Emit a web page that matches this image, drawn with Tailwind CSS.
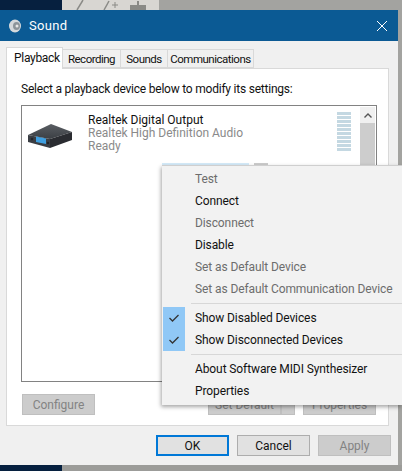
<!DOCTYPE html>
<html lang="en">
<head>
<meta charset="UTF-8">
<title>Sound</title>
<script src="https://cdn.jsdelivr.net/npm/@tailwindcss/browser@4"></script>
</head>
<body class="relative w-[402px] h-[471px] overflow-hidden bg-[#8f8f8f] text-[12px] leading-[16px] text-[#111] font-['Roboto','Liberation_Sans',sans-serif]">
  <!-- desktop behind the dialog -->
  <div class="flex h-[10px]">
    <div class="w-[62px] bg-[#06203f]"></div>
    <div class="w-[97px] bg-[#d8d6d2] flex items-start">
      <svg width="97" height="10" viewBox="0 0 97 10" fill="none" stroke="#8a8a86" stroke-width="1.5">
        <path d="M15 10 L21 0"/>
        <path d="M42 10 L47 1"/>
        <path d="M50 5h6M53 2v6" stroke-width="1"/>
        <path d="M69 9 h14 v-3 h-14z M76 6 V1" fill="#8a8a86" stroke-width="2"/>
      </svg>
    </div>
    <div class="flex-1 bg-[#a3a3a0]"></div>
  </div>
  <div class="flex h-[455px]">
    <!-- dialog -->
    <div class="w-[398px] bg-[#f0f0f0] flex flex-col">
      <div class="h-[31px] bg-[#0b5a94] flex items-center pl-[9px] pr-[11px] text-white">
        <svg width="13" height="14" viewBox="0 0 13 14">
          <ellipse cx="6" cy="7" rx="6" ry="6.5" fill="#d5d9dc"/>
          <ellipse cx="7.5" cy="7" rx="3.5" ry="4" fill="#8c949a"/>
          <circle cx="8" cy="7" r="1.5" fill="#e8e8e8"/>
        </svg>
        <span class="ml-[7px] text-[13px] tracking-[0.3px]">Sound</span>
        <svg class="ml-auto" width="10" height="10" viewBox="0 0 10 10" stroke="white" fill="none"><path d="M0 0L10 10M10 0L0 10"/></svg>
      </div>
      <!-- tabs -->
      <div class="flex items-end h-[27px] pl-[6px] text-[11.5px] tracking-[-0.5px]">
        <div class="h-[22px] w-[57px] -mb-px z-10 bg-white border border-b-0 border-[#d9d9d9] pl-[7px] pt-[2px] text-[12px] tracking-[-0.3px]">Playback</div>
        <div class="h-[19px] w-[58px] bg-[#f0f0f0] border border-l-0 border-[#d9d9d9] text-center pt-[1px]">Recording</div>
        <div class="h-[19px] w-[47px] bg-[#f0f0f0] border border-l-0 border-[#d9d9d9] text-center pt-[1px]">Sounds</div>
        <div class="h-[19px] w-[86px] bg-[#f0f0f0] border border-l-0 border-[#d9d9d9] text-center pt-[1px]">Communications</div>
      </div>
      <!-- tab page -->
      <div class="ml-[6px] w-[383px] h-[358px] bg-white border border-[#d9d9d9] pl-[14px] pr-[12px] pt-[12px]">
        <p class="h-[16px] whitespace-nowrap tracking-[-0.22px]">Select a playback device below to modify its settings:</p>
        <div class="mt-[8px] h-[277px] w-[356px] border border-[#828282] flex">
          <div class="flex-1 flex pl-[6px] pt-[8px]">
            <svg class="mt-[10px]" width="44" height="24" viewBox="0 0 44 24">
              <defs>
                <linearGradient id="top" x1="0" y1="0" x2="0" y2="1"><stop offset="0" stop-color="#5a5e63"/><stop offset="1" stop-color="#3b3f44"/></linearGradient>
              </defs>
              <path d="M0 11 L23 0 L44 8 L22 15Z" fill="url(#top)"/>
              <path d="M0 11 L22 15 V24 L0 18Z" fill="#3a3e44"/>
              <path d="M22 15 L44 8 V16 L22 24Z" fill="#2a2c31"/>
              <path d="M8 12.5 L18 14.5 V20 L8 18Z" fill="#3f9fe0"/>
              <circle cx="4" cy="15" r="1.3" fill="#23252a"/>
              <circle cx="20" cy="19" r="1.2" fill="#202226"/>
            </svg>
            <div class="ml-[16px]">
              <div class="h-[13px] leading-[13px] whitespace-nowrap">Realtek Digital Output</div>
              <div class="h-[13px] leading-[13px] whitespace-nowrap text-[#8a8a8a]">Realtek High Definition Audio</div>
              <div class="h-[13px] leading-[13px] text-[#8a8a8a]">Ready</div>
            </div>
            <div class="ml-auto mr-[9px] mt-[-2px] w-[14px] h-[39px] flex flex-col gap-px">
              <i class="h-[3px] bg-[#c4d8e2]"></i><i class="h-[3px] bg-[#c4d8e2]"></i><i class="h-[3px] bg-[#c4d8e2]"></i><i class="h-[3px] bg-[#c4d8e2]"></i><i class="h-[3px] bg-[#c4d8e2]"></i><i class="h-[3px] bg-[#c4d8e2]"></i><i class="h-[3px] bg-[#c4d8e2]"></i><i class="h-[3px] bg-[#c4d8e2]"></i><i class="h-[3px] bg-[#c4d8e2]"></i><i class="h-[3px] bg-[#c4d8e2]"></i>
            </div>
          </div>
          <div class="w-[15px] my-[1px] mr-px bg-[#f0f0f0] flex flex-col">
            <div class="h-[16px] flex items-center justify-center">
              <svg width="8" height="5" viewBox="0 0 8 5" fill="none" stroke="#555" stroke-width="1.4"><path d="M0.5 4.5L4 1L7.5 4.5"/></svg>
            </div>
            <div class="flex-1 bg-[#cdcdcd]"></div>
          </div>
        </div>
        <div class="mt-[12px] h-[21px] flex">
          <div class="ml-px w-[73px] h-[21px] bg-[#cccccc] border border-[#bfbfbf] text-[#838383] flex items-center justify-center">Configure</div>
          <div class="ml-[113px] w-[73px] h-[21px] bg-[#cccccc] border border-[#bfbfbf] text-[#838383] flex items-center justify-center">Set Default</div>
          <div class="w-[14px] h-[21px] bg-[#cccccc] border border-[#bfbfbf]"></div>
          <div class="ml-[8px] w-[73px] h-[21px] bg-[#cccccc] border border-[#bfbfbf] text-[#838383] flex items-center justify-center">Properties</div>
        </div>
      </div>
      <!-- dialog buttons -->
      <div class="flex justify-end pt-[9px] pr-[7px] gap-[8px]">
        <div class="w-[73px] h-[21px] bg-[#e1e1e1] border-2 border-[#0078d7] flex items-center justify-center">OK</div>
        <div class="w-[73px] h-[21px] bg-[#e1e1e1] border border-[#adadad] flex items-center justify-center">Cancel</div>
        <div class="w-[73px] h-[21px] bg-[#cccccc] border border-[#bfbfbf] text-[#838383] flex items-center justify-center">Apply</div>
      </div>
    </div>
    <div class="flex-1 bg-[#a3a3a0]"></div>
  </div>
  <div class="flex h-[6px]">
    <div class="w-[62px] bg-[#06203f]"></div>
    <div class="flex-1 bg-[#9c9c99]"></div>
  </div>
  <!-- second list row peeking out above the menu -->
  <div class="absolute left-[162px] top-[163px] w-[87px] h-[2px] bg-[#d5ebf9]"></div>
  <div class="absolute left-[254px] top-[163px] w-[14px] h-[2px] bg-[#cccccc]"></div>
  <!-- context menu -->
  <div class="absolute left-[162px] top-[165px] w-[240px] h-[240px] bg-[#f2f2f2] shadow-[-1px_2px_4px_rgba(0,0,0,0.35)] border-t border-[#cfcfcf] pt-[2px] tracking-[-0.1px]">
    <div class="h-[22px] pl-[33px] flex items-center text-[#6d6d6d]">Test</div>
    <div class="h-[22px] pl-[33px] flex items-center">Connect</div>
    <div class="h-[22px] pl-[33px] flex items-center text-[#6d6d6d]">Disconnect</div>
    <div class="h-[22px] pl-[33px] flex items-center">Disable</div>
    <div class="h-[22px] pl-[33px] flex items-center text-[#6d6d6d]">Set as Default Device</div>
    <div class="h-[22px] pl-[33px] flex items-center text-[#6d6d6d] whitespace-nowrap">Set as Default Communication Device</div>
    <div class="ml-[29px] h-px my-[3px] bg-[#d7d7d7]"></div>
    <div class="h-[22px] flex items-center">
      <div class="ml-px w-[22px] h-[22px] bg-[#90c8f6] flex items-center justify-center">
        <svg width="10" height="8" viewBox="0 0 10 8" fill="none" stroke="#333" stroke-width="1.3"><path d="M0.5 4L3.5 7L9.5 1"/></svg>
      </div>
      <span class="ml-[10px]">Show Disabled Devices</span>
    </div>
    <div class="h-[22px] flex items-center">
      <div class="ml-px w-[22px] h-[22px] bg-[#90c8f6] flex items-center justify-center">
        <svg width="10" height="8" viewBox="0 0 10 8" fill="none" stroke="#333" stroke-width="1.3"><path d="M0.5 4L3.5 7L9.5 1"/></svg>
      </div>
      <span class="ml-[10px]">Show Disconnected Devices</span>
    </div>
    <div class="ml-[29px] h-px my-[3px] bg-[#d7d7d7]"></div>
    <div class="h-[22px] pl-[33px] flex items-center whitespace-nowrap">About Software MIDI Synthesizer</div>
    <div class="h-[22px] pl-[33px] flex items-center">Properties</div>
  </div>
</body>
</html>
